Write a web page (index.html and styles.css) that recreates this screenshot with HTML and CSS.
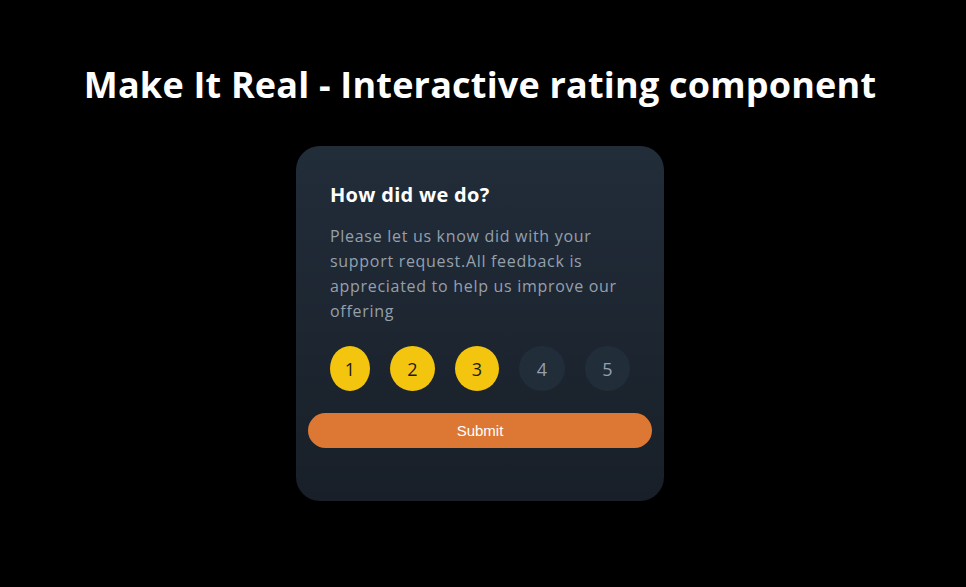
FILE: index.html
```html
<!DOCTYPE html>
<html lang="en">
<head>
<meta charset="utf-8">
<title>Interactive rating component</title>
<link rel="stylesheet" href="styles.css">
</head>
<body>
<main class="page">
  <h1 class="title">Make It Real - Interactive rating component</h1>
  <section class="card">
    <h2 class="card-title">How did we do?</h2>
    <p class="card-text">Please let us know did with your support request.All feedback is appreciated to help us improve our offering</p>
    <div class="ratings">
      <button class="rate rate-1 active">1</button>
      <button class="rate rate-2 active">2</button>
      <button class="rate rate-3 active">3</button>
      <button class="rate rate-4">4</button>
      <button class="rate rate-5">5</button>
    </div>
    <button class="submit">Submit</button>
  </section>
</main>
</body>
</html>
```
FILE: styles.css
```css
* { box-sizing: border-box; }
html, body { margin: 0; padding: 0; background: #000; }
body { font-family: "Open Sans", "DejaVu Sans", sans-serif; color: #fff; }
.page {
  width: 960px;
  display: flex;
  flex-direction: column;
  align-items: center;
  padding-top: 60px;
}
.title {
  margin: 0;
  font-size: 36px;
  font-weight: 700;
  line-height: 50px;
  letter-spacing: 0.2px;
}
.card {
  margin-top: 36px;
  width: 368px;
  height: 355px;
  border-radius: 24px;
  background: linear-gradient(180deg, #222d3a 0%, #181f28 100%);
  padding: 34px 34px 0 34px;
}
.card-title {
  margin: 0;
  font-size: 20px;
  font-weight: 700;
  line-height: 30px;
  letter-spacing: 0.3px;
}
.card-text {
  margin: 14px 0 0 0;
  font-size: 16px;
  line-height: 25px;
  letter-spacing: 0.7px;
  color: #95a0ad;
}
.ratings {
  display: flex;
  gap: 20px;
  margin-top: 22px;
}
.rate {
  height: 45px;
  width: 45px;
  border: none;
  border-radius: 50%;
  font-family: inherit;
  font-size: 18px;
  background: #222d3a;
  color: #95a0ad;
  padding: 0;
}
.rate-1 { width: 40px; }
.rate-3 { width: 44px; }
.rate-4 { width: 46px; }
.rate.active { background: #f4c50e; color: #1c1c1c; }
.submit {
  display: block;
  margin: 22px -22px 0 -22px;
  width: calc(100% + 44px);
  height: 35px;
  border: none;
  border-radius: 18px;
  background: #dc7833;
  color: #fff;
  font-family: "Liberation Sans", Arial, sans-serif;
  font-size: 15px;
}
```
